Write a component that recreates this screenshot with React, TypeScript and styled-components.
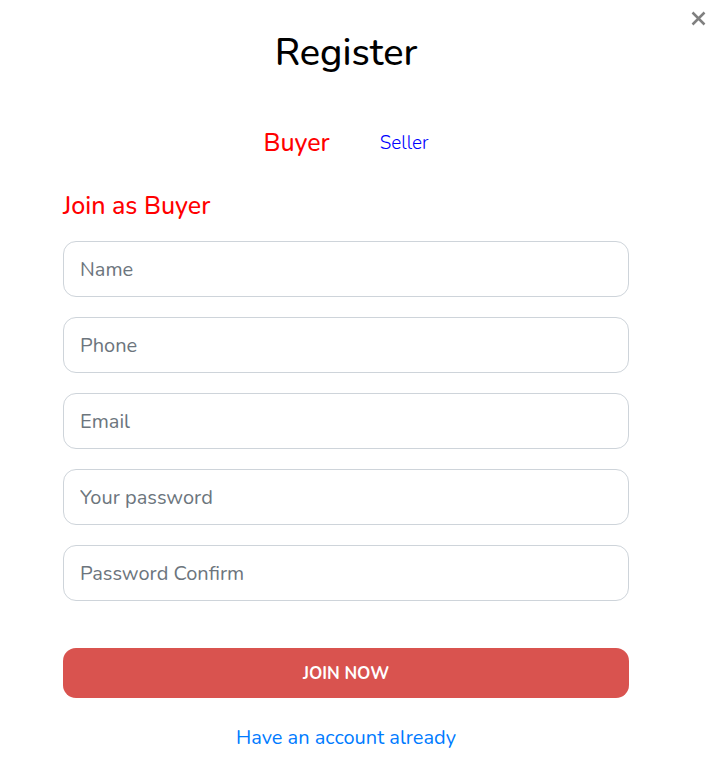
import React from "react";
import styled, { createGlobalStyle } from "styled-components";

const GlobalStyle = createGlobalStyle`
  *, *::before, *::after { box-sizing: border-box; }
  body {
    margin: 0;
    background: #fff;
    color: #000;
    font-family: Nunito, "Open Sans", "Noto Sans", sans-serif;
  }
  button, input { font-family: inherit; }
`;

const Dialog = styled.main`
  position: relative;
  padding: 29px 80px 28px 63px;
`;

const CloseButton = styled.button`
  position: absolute;
  top: 11px;
  right: 3px;
  display: flex;
  padding: 0;
  border: 0;
  background: none;
  color: #808080;
  cursor: pointer;
`;

const Title = styled.h1`
  margin: 0 0 50px;
  font-size: 38px;
  font-weight: 500;
  line-height: 48px;
  text-align: center;
`;

const Tabs = styled.nav`
  display: flex;
  justify-content: center;
  align-items: center;
  gap: 50px;
  height: 32px;
  margin-bottom: 32px;
`;

const Tab = styled.button<{ $active?: boolean }>`
  padding: 0;
  border: 0;
  background: none;
  color: ${(p) => (p.$active ? "#ff0000" : "#0000ff")};
  font-size: ${(p) => (p.$active ? "25px" : "19px")};
  font-weight: ${(p) => (p.$active ? 500 : 300)};
  line-height: 30px;
  cursor: pointer;
`;

const Heading = styled.h2`
  margin: 0 0 20px;
  color: #ff0000;
  font-size: 25px;
  font-weight: 500;
  line-height: 30px;
`;

const Form = styled.form`
  display: flex;
  flex-direction: column;
  gap: 20px;
`;

const Field = styled.input`
  width: 100%;
  height: 56px;
  padding: 1px 16px 0;
  border: 1px solid #ced4da;
  border-radius: 13px;
  background: #fff;
  color: #495057;
  font-size: 20px;
  &::placeholder { color: #6c757d; opacity: 1; }
`;

const Submit = styled.button`
  height: 50px;
  margin-top: 27px;
  border: 0;
  border-radius: 13px;
  background: #d9534f;
  color: #fff;
  font-size: 17px;
  font-weight: 700;
  cursor: pointer;
`;

const AccountLink = styled.a`
  align-self: center;
  margin-top: 4px;
  color: #007bff;
  font-size: 20px;
  line-height: 32px;
  text-decoration: none;
`;

const fields = [
  { label: "Name", type: "text" },
  { label: "Phone", type: "tel" },
  { label: "Email", type: "email" },
  { label: "Your password", type: "password" },
  { label: "Password Confirm", type: "password" },
];

export default function App() {
  return (
    <>
      <GlobalStyle />
      <Dialog>
        <CloseButton type="button" aria-label="Close">
          <svg width="15" height="15" viewBox="0 0 15 15" fill="none" stroke="currentColor" strokeWidth="2.5">
            <path d="M1.5 1.5 13.5 13.5M13.5 1.5 1.5 13.5" />
          </svg>
        </CloseButton>
        <Title>Register</Title>
        <Tabs aria-label="Account type">
          <Tab type="button" $active aria-pressed="true">Buyer</Tab>
          <Tab type="button" aria-pressed="false">Seller</Tab>
        </Tabs>
        <Heading>Join as Buyer</Heading>
        <Form>
          {fields.map((f) => (
            <Field key={f.label} type={f.type} placeholder={f.label} aria-label={f.label} />
          ))}
          <Submit type="button">JOIN NOW</Submit>
          <AccountLink href="#login">Have an account already</AccountLink>
        </Form>
      </Dialog>
    </>
  );
}
